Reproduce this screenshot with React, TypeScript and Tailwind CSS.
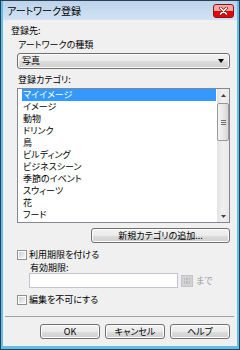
import React from "react";

const font: React.CSSProperties = {
  fontFamily: '"Noto Sans CJK JP", "Noto Sans", sans-serif',
  fontFeatureSettings: '"palt"',
};

function Win7Button({ label, w }: { label: string; w: string }) {
  return (
    <div
      className={`${w} h-[15px] rounded-[3px] border border-[#707070] bg-[#e6e6e6] bg-[linear-gradient(to_bottom,#f2f2f2,#ebebeb_50%,#dddddd_51%,#cfcfcf)] flex items-center justify-center text-[9px] leading-[12px] text-black shadow-[inset_0_0_0_1px_#fcfcfc]`}
    >
      {label}
    </div>
  );
}

function CheckBox() {
  return (
    <div className="w-[10px] h-[10px] border border-[#8e8f8f] bg-white p-[1px]">
      <div className="w-full h-full bg-[#e0e0e0] bg-[linear-gradient(135deg,#cbcfd5,#f6f6f6)]" />
    </div>
  );
}

export default function App() {
  const items = [
    "マイイメージ",
    "イメージ",
    "動物",
    "ドリンク",
    "鳥",
    "ビルディング",
    "ビジネスシーン",
    "季節のイベント",
    "スウィーツ",
    "花",
    "フード",
  ];
  return (
    <div className="w-[240px] h-[350px] bg-[#2b3f55] p-[1px]" style={font}>
      <div className="w-full h-full bg-[#5cc0ea] flex flex-col px-[2px] pb-[3px]">
        {/* title bar */}
        <div className="h-[19px] bg-[#c6daef] bg-[linear-gradient(to_bottom,#bcd3ea,#d2e2f3)] flex items-center justify-between pr-[3px]">
          <span className="ml-[4px] text-[10px] leading-[12px] text-black">アートワーク登録</span>
          <div className="mt-[1px] w-[21px] h-[14px] rounded-[3px] border border-red-900 bg-red-500 flex flex-col overflow-hidden relative">
            <div className="h-[6px] w-full bg-red-300" />
            <div className="flex-1 w-full bg-red-600" />
            <svg className="absolute left-[5px] top-[2px]" width="9" height="8" viewBox="0 0 9 8">
              <path d="M1.5 1 L7.5 7 M7.5 1 L1.5 7" stroke="#6a2014" strokeWidth="3" strokeLinecap="round" />
              <path d="M1.5 1 L7.5 7 M7.5 1 L1.5 7" stroke="#ffffff" strokeWidth="1.6" strokeLinecap="round" />
            </svg>
          </div>
        </div>
        {/* content */}
        <div className="flex-1 bg-[#f0f0f0] flex flex-col text-[9px] leading-[12px] text-black">
          <div className="mt-[5px] ml-[8px] h-[12px]">登録先:</div>
          <div className="mt-[2px] ml-[15px] h-[12px]">アートワークの種類</div>
          <div className="mt-[2px] ml-[14px] w-[213px] h-[16px] rounded-[3px] border border-[#707070] bg-[#e6e6e6] bg-[linear-gradient(to_bottom,#f2f2f2,#ebebeb_50%,#dddddd_51%,#cfcfcf)] flex items-center justify-between pl-[4px] pr-[5px] shadow-[inset_0_0_0_1px_#fafafa]">
            <span>写真</span>
            <svg width="6" height="4" viewBox="0 0 6 4">
              <path d="M0 0 H6 L3 4 Z" fill="#000" />
            </svg>
          </div>
          <div className="mt-[5px] ml-[15px] h-[12px]">登録カテゴリ:</div>
          <div className="mt-[2px] ml-[14px] w-[213px] h-[135px] border border-[#828790] bg-white flex">
            <div className="flex-1 pl-[4px] pr-[1px] flex flex-col">
              {items.map((it, i) => (
                <div
                  key={it}
                  className={`h-[12px] pl-[1px] whitespace-nowrap ${i === 0 ? "bg-[#3399ff] text-white" : ""}`}
                >
                  {it}
                </div>
              ))}
            </div>
            <div className="w-[12px] h-full bg-[#ececec] bg-[linear-gradient(to_right,#e3e3e3,#f0f0f0,#e8e8e8)] flex flex-col items-center">
              <div className="h-[12px] w-full flex items-center justify-center">
                <svg width="5" height="3" viewBox="0 0 5 3">
                  <path d="M0 3 L2.5 0 L5 3 Z" fill="#404040" />
                </svg>
              </div>
              <div className="mt-[2px] w-[12px] h-[38px] rounded-[2px] border border-[#979797] bg-[#e8e8e8] bg-[linear-gradient(to_right,#f4f4f4,#e8e8e8,#d6d6d6)] flex flex-col items-center justify-center gap-[1px]">
                <div className="w-[5px] h-[1px] bg-[#6e6e6e]" />
                <div className="w-[5px] h-[1px] bg-[#6e6e6e]" />
                <div className="w-[5px] h-[1px] bg-[#6e6e6e]" />
              </div>
              <div className="flex-1" />
              <div className="h-[12px] w-full flex items-center justify-center">
                <svg width="5" height="3" viewBox="0 0 5 3">
                  <path d="M0 0 H5 L2.5 3 Z" fill="#404040" />
                </svg>
              </div>
            </div>
          </div>
          <div className="mt-[5px] ml-[88px]">
            <Win7Button label="新規カテゴリの追加..." w="w-[139px]" />
          </div>
          <div className="mt-[6px] ml-[14px] h-[12px] flex items-center gap-[2px]">
            <CheckBox />
            <span>利用期限を付ける</span>
          </div>
          <div className="mt-[1px] ml-[27px] h-[12px]">有効期限:</div>
          <div className="-mt-[1px] ml-[26px] h-[15px] flex items-center">
            <div className="w-[149px] h-[15px] border border-[#c2c5cb] bg-white" />
            <div className="ml-[3px] w-[12px] h-[12px] bg-[#d3d3d3] border border-[#c4c4c4] grid grid-cols-3 gap-[1px] p-[2px]">
              <div className="bg-[#bcbcbc]" />
              <div className="bg-[#bcbcbc]" />
              <div className="bg-[#bcbcbc]" />
              <div className="bg-[#bcbcbc]" />
              <div className="bg-[#bcbcbc]" />
              <div className="bg-[#bcbcbc]" />
            </div>
            <span className="ml-[3px] text-[#a3a3a3]">まで</span>
          </div>
          <div className="mt-[6px] ml-[14px] h-[12px] flex items-center gap-[2px]">
            <CheckBox />
            <span>編集を不可にする</span>
          </div>
          <div className="mt-[10px] ml-[2px] w-[229px] h-[1px] bg-[#a0a0a0]" />
          <div className="mt-[7px] ml-[37px] flex gap-[5px]">
            <Win7Button label="OK" w="w-[60px]" />
            <Win7Button label="キャンセル" w="w-[60px]" />
            <Win7Button label="ヘルプ" w="w-[60px]" />
          </div>
        </div>
      </div>
    </div>
  );
}
